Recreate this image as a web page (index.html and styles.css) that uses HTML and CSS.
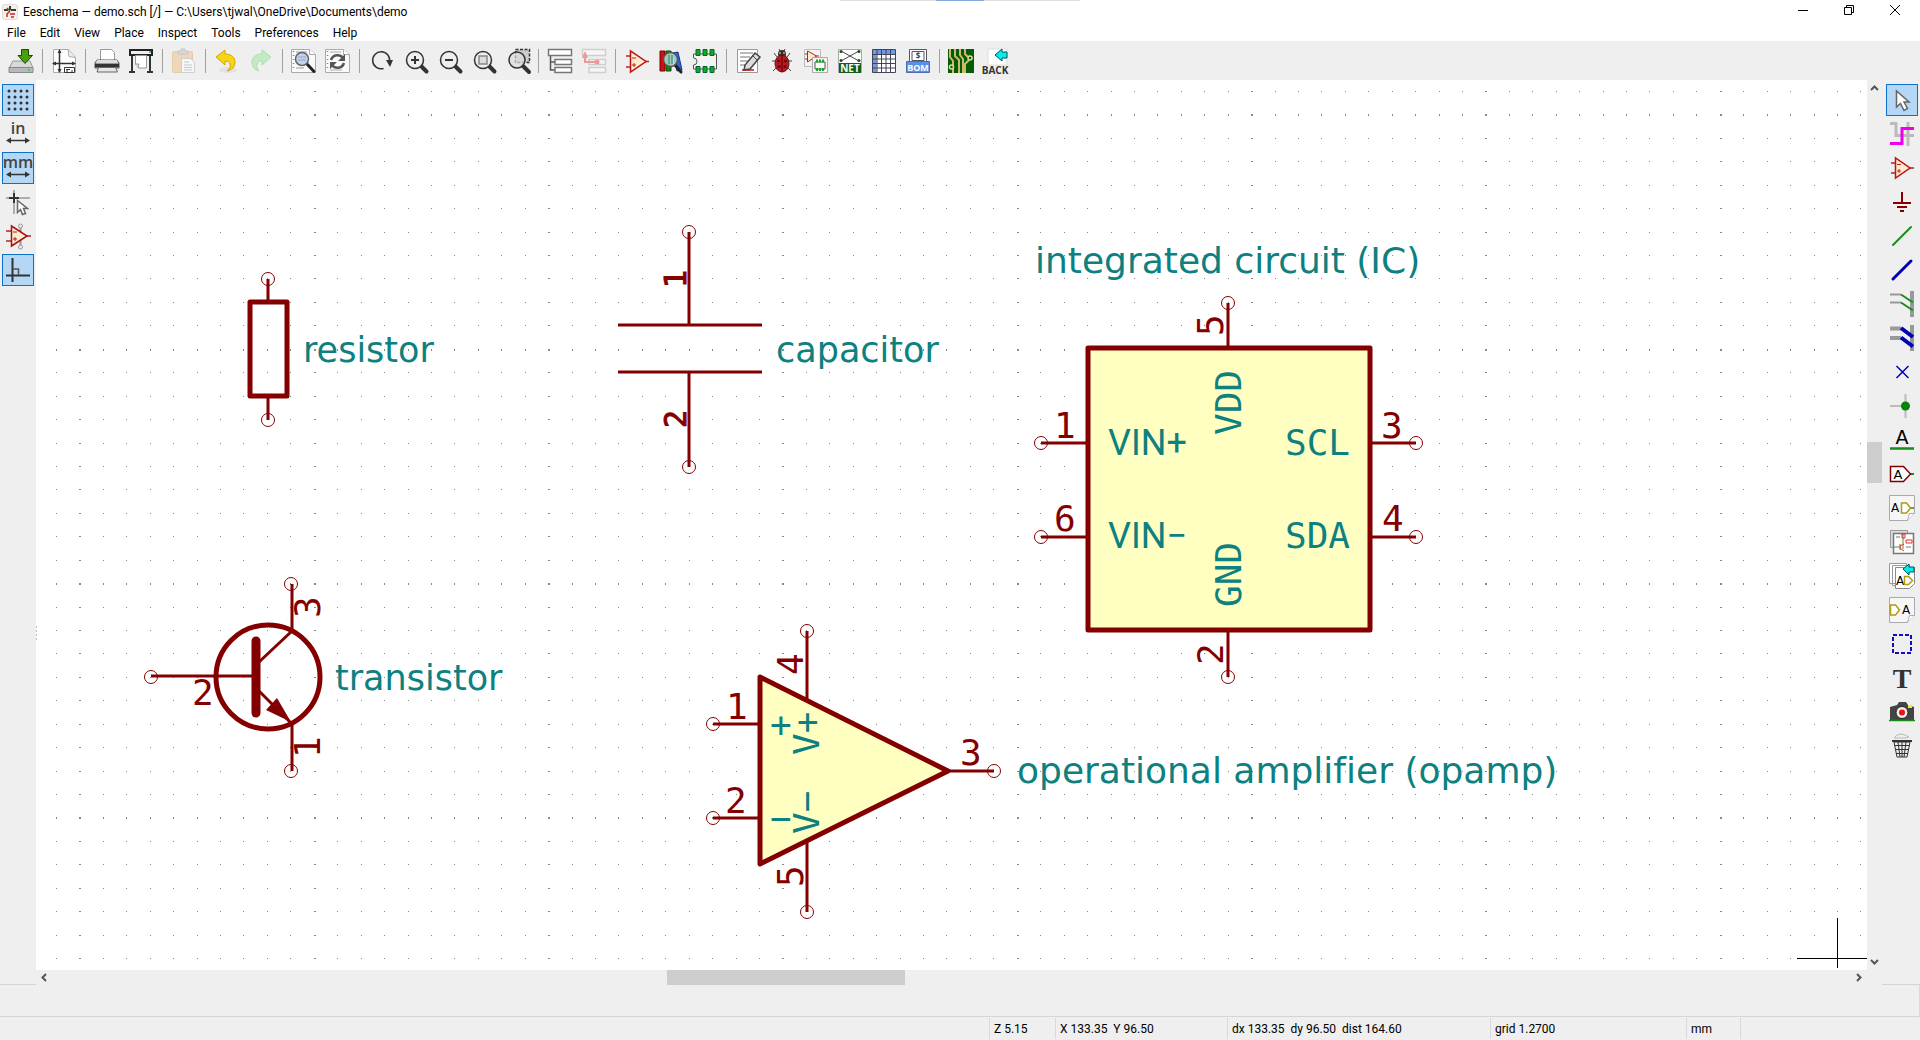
FILE: index.html
```html
<!DOCTYPE html>
<html lang="en">
<head>
<meta charset="utf-8">
<title>Eeschema — demo.sch</title>
<link rel="stylesheet" href="styles.css">
</head>
<body>
<header class="titlebar">
  <div class="grip"></div>
  <svg class="app-icon" viewBox="0 0 16 16"><rect x=".5" y=".5" width="15" height="15" rx="2" fill="#f4f1e8" stroke="#ddd"/><path d="M8 2v4M2 6h4M9 6h5" stroke="#4a3030" stroke-width="2" fill="none"/><path d="M8 7l-3 3v3M8 10h5M9 13h3" stroke="#c22" stroke-width="1.500" fill="none"/><path d="M5 4l3 3" stroke="#373" stroke-width="1.500"/></svg>
  <h1 class="title">Eeschema — demo.sch [/] — C:\Users\tjwal\OneDrive\Documents\demo</h1>
  <div class="window-buttons">
    <button aria-label="Minimize"><svg viewBox="0 0 10 10"><path d="M0 5.500h10" stroke="#000"/></svg></button>
    <button aria-label="Restore"><svg viewBox="0 0 10 10"><path d="M.5 2.500h7v7h-7zM2.500 2.500v-2h7v7h-2" fill="none" stroke="#000"/></svg></button>
    <button aria-label="Close"><svg viewBox="0 0 10 10"><path d="M0 0l10 10M10 0L0 10" stroke="#000"/></svg></button>
  </div>
</header>
<nav class="menubar">
  <button>File</button><button>Edit</button><button>View</button><button>Place</button><button>Inspect</button><button>Tools</button><button>Preferences</button><button>Help</button>
</nav>
<div class="toolbar">
  <button aria-label="Save"><svg viewBox="0 0 26 26"><path d="M5 13h17l3 7H1z" fill="#d9d9d9" stroke="#999"/><path d="M1 19.500h24v5H1z" fill="#b9b9b9" stroke="#888"/><circle cx="21" cy="22" r="1" fill="#3c3"/><path d="M13.500 1.500h7v6h4L17 15.500 10 7.500h3.500z" fill="#4a9f0a" stroke="#1e4a00"/></svg></button>
  <i class="sep"></i>
  <button aria-label="Page settings"><svg viewBox="0 0 26 26"><path d="M2.500 1.500h15l7 8v15h-22z" fill="#fff" stroke="#aaa"/><path d="M17 1.500l1 7 6 1" fill="#eee" stroke="#aaa"/><path d="M8.500 3v21M2 15.500h22" stroke="#333" stroke-width="1.500"/><path d="M8.500 1l-2 4h4zM8.500 25l-2-4h4zM1 15.500l4-2v4zM25 15.500l-4-2v4z" fill="#333"/><path d="M13.500 19.500h10v5h-10z" fill="#fff" stroke="#333"/><path d="M15 21.500h4M15 23h2M20 23h2" stroke="#333"/></svg></button>
  <i class="sep"></i>
  <button aria-label="Print"><svg viewBox="0 0 26 26"><path d="M6.500 13V1.500h11l3 3V13" fill="#fff" stroke="#999"/><path d="M3 12h20l2 3v5H1v-5z" fill="#999" stroke="#555"/><path d="M3 12h20l1 3H2z" fill="#ddd"/><path d="M1 16h24v3H1z" fill="#333"/><path d="M4.500 19.500h17l2 4.500H3z" fill="#e6e6e6" stroke="#666"/></svg></button>
  <button aria-label="Plot"><svg viewBox="0 0 26 26"><path d="M4 8v15M22 8v15M1 24h6M19 24h6" stroke="#333" stroke-width="2"/><path d="M2 2h22v5H2z" fill="#eee" stroke="#222" stroke-width="2"/><circle cx="22" cy="4" r="1" fill="#2b2"/><path d="M7.500 7.500h11V20h-8l-3-4z" fill="#fff" stroke="#999"/><path d="M10 20l1-4-4 0" fill="#ddd" stroke="#999"/></svg></button>
  <i class="sep"></i>
  <button aria-label="Paste" disabled><svg viewBox="0 0 26 26" opacity=".45"><rect x="1.500" y="3.500" width="20" height="21" rx="1" fill="#eebc78" stroke="#d8a45c"/><path d="M7 6V3h3V1h4v2h3v3z" fill="#bbb" stroke="#999"/><path d="M10.500 10.500h9l4 4v10h-13z" fill="#fff" stroke="#aaa"/><path d="M13 14h5M13 17h8M13 19.500h8M13 22h8" stroke="#99a"/></svg></button>
  <i class="sep"></i>
  <button aria-label="Undo"><svg viewBox="0 0 26 26"><ellipse cx="14" cy="22" rx="9" ry="3" fill="#e2e2e2"/><path d="M2 9l9-7v4c7 0 10 4 10 8 0 5-3 8-8 9 3-3 4-4 3-7-.5-2-2-3-5-3v4z" fill="#f7d417" stroke="#d9a400"/></svg></button>
  <button aria-label="Redo" disabled><svg viewBox="0 0 26 26" opacity=".45"><path d="M23 9l-9-7v4C7 6 4 10 4 14c0 5 3 8 7 9-2-3-3-4-2-7 .5-2 2-3 5-3v4z" fill="#8fe68f" stroke="#5c5"/></svg></button>
  <i class="sep"></i>
  <button aria-label="Find"><svg viewBox="0 0 26 26"><path d="M.5 1.500h18l6 5v18H.5z" fill="#fafafa" stroke="#aaa"/><path d="M18.500 1.500v5h6" fill="#fff" stroke="#aaa"/><path d="M2.500 3v20" stroke="#888" stroke-width="1.500" stroke-dasharray="1 3"/><path d="M5 4h11M5 8h3M5 20h8" stroke="#999"/><path d="M16 16l7 7.500" stroke="#222" stroke-width="3" stroke-linecap="round"/><circle cx="11" cy="11" r="6.500" fill="#c3d3ef" stroke="#666" stroke-width="1.500"/><path d="M7 9h8M7 12h8" stroke="#8fa4cc"/></svg></button>
  <button aria-label="Replace"><svg viewBox="0 0 26 26"><path d="M.5 1.500h18l6 5v18H.5z" fill="#fafafa" stroke="#aaa"/><path d="M18.500 1.500v5h6" fill="#fff" stroke="#aaa"/><path d="M2.500 3v20" stroke="#888" stroke-width="1.500" stroke-dasharray="1 3"/><path d="M5 4h11M5 22h12" stroke="#aaa"/><path d="M6 12c2-6 9-6 12-2M19 15c-2 6-9 6-12 2" stroke="#555" stroke-width="2.500" fill="none"/><path d="M20 6v7h-7zM5 21v-7h7z" fill="#555"/></svg></button>
  <i class="sep"></i>
  <button aria-label="Redraw"><svg viewBox="0 0 26 26"><path d="M15.500 20.500A8.500 8.500 0 1 1 21.500 14" fill="none" stroke="#333" stroke-width="1.500"/><path d="M18 12h7l-3 7z" fill="#333"/></svg></button>
  <button aria-label="Zoom in"><svg viewBox="0 0 26 26"><path d="M19 18l5.500 5.500" stroke="#333" stroke-width="4" stroke-linecap="round"/><circle cx="13" cy="12" r="8.500" fill="#eee" stroke="#333" stroke-width="1.500"/><path d="M9 12h8M13 8v8" stroke="#333" stroke-width="2"/></svg></button>
  <button aria-label="Zoom out"><svg viewBox="0 0 26 26"><path d="M19 18l5.500 5.500" stroke="#333" stroke-width="4" stroke-linecap="round"/><circle cx="13" cy="12" r="8.500" fill="#eee" stroke="#333" stroke-width="1.500"/><path d="M9 12h8" stroke="#333" stroke-width="2"/></svg></button>
  <button aria-label="Zoom to fit"><svg viewBox="0 0 26 26"><path d="M19 18l5.500 5.500" stroke="#333" stroke-width="4" stroke-linecap="round"/><circle cx="13" cy="12" r="8.500" fill="#eee" stroke="#333" stroke-width="1.500"/><path d="M9 8h8v8H9z" fill="#ddd" stroke="#888" stroke-width="1.500"/></svg></button>
  <button aria-label="Zoom to selection"><svg viewBox="0 0 26 26"><path d="M11.500 1.500h14v13h-14z" fill="#ccc" stroke="#333" stroke-width="1.500" stroke-dasharray="3 1.500"/><path d="M19 18l6 6" stroke="#333" stroke-width="4" stroke-linecap="round"/><circle cx="13" cy="12" r="8" fill="#ddd" fill-opacity=".7" stroke="#333" stroke-width="1.500"/></svg></button>
  <i class="sep"></i>
  <button aria-label="Hierarchy navigator"><svg viewBox="0 0 26 26"><path d="M3.500 7v15H8M3.500 14H8" fill="none" stroke="#555" stroke-width="1.500"/><path d="M1.500 1.500h23v6h-23zM8 11.500h16.500v5H8zM8 19.500h16.500v5H8z" fill="#fff" stroke="#777" stroke-width="1.500"/></svg></button>
  <button aria-label="Leave sheet" disabled><svg viewBox="0 0 26 26" opacity=".45"><path d="M1.500 1.500h23v6h-23zM8 11.500h16.500v5H8zM8 19.500h16.500v5H8z" fill="#fff" stroke="#aaa" stroke-width="1.500"/><path d="M4 8v6h12" fill="none" stroke="#e33" stroke-width="2"/><path d="M4 3L1 10h6z" fill="#e33"/><circle cx="16" cy="14" r="2.500" fill="#e33"/></svg></button>
  <i class="sep"></i>
  <button aria-label="Symbol editor"><svg viewBox="0 0 26 26"><path d="M2 8h5M2 19h5M20 13.500h5" stroke="#b22" stroke-width="1.500"/><path d="M6.500 3v21L22 13.500z" fill="#fdebcf" stroke="#b11" stroke-width="1.500"/><path d="M8 10h4M8 17h4M10 15v4" stroke="#b22"/></svg></button>
  <button aria-label="Symbol libraries"><svg viewBox="0 0 26 26"><path d="M2 3h5v20H2z" fill="#c11" stroke="#700"/><path d="M8 3h5v20H8z" fill="#181" stroke="#050"/><path d="M15 5l5-1 4 18-5 1z" fill="#36c" stroke="#139"/><path d="M17 17l6 7" stroke="#222" stroke-width="3" stroke-linecap="round"/><circle cx="12.500" cy="11.500" r="7" fill="#bcd8cf" fill-opacity=".85" stroke="#555" stroke-width="1.500"/><path d="M11 7v9M14 7v9" stroke="#5a9" stroke-width="2"/></svg></button>
  <button aria-label="Footprint editor"><svg viewBox="0 0 26 26"><path d="M1.500 6v4a3 3 0 0 1 0 7v4h23V6z" fill="#f4f4f4" stroke="#555"/><path d="M4 1.500h4v6H4zM11 1.500h4v6h-4zM18 1.500h4v6h-4zM4 18.500h4v6H4zM11 18.500h4v6h-4zM18 18.500h4v6h-4z" fill="#1a2" stroke="#063"/></svg></button>
  <i class="sep"></i>
  <button aria-label="Annotate"><svg viewBox="0 0 26 26"><path d="M2.500 1.500h20v23h-20z" fill="#fff" stroke="#999"/><path d="M5 5h13M5 9h10M5 13h8M5 17h5" stroke="#777"/><path d="M7 22h12" stroke="#c11" stroke-width="1.500"/><path d="M20 5l5 4-10 12-6 1 1-5z" fill="#ddd" stroke="#444" stroke-width="1.500"/><path d="M18 8l4 4" stroke="#444"/></svg></button>
  <button aria-label="Electrical rules check"><svg viewBox="0 0 26 26"><path d="M5 5l3 4M21 5l-3 4M3 13h5M23 13h-5M4 23l4-4M22 23l-4-4M10 1l2 4M16 1l-2 4" stroke="#444"/><ellipse cx="13" cy="6" rx="4" ry="4" fill="#332"/><path d="M10 5h2M14 5h2" stroke="#eed"/><ellipse cx="13" cy="15.500" rx="7" ry="8.500" fill="#c11622" stroke="#611"/><path d="M13 7v17" stroke="#500"/><circle cx="9.500" cy="13" r="1.500" fill="#411"/><circle cx="16.500" cy="13" r="1.500" fill="#411"/><circle cx="10" cy="18.500" r="1.500" fill="#411"/><circle cx="16" cy="18.500" r="1.500" fill="#411"/></svg></button>
  <button aria-label="Assign footprints"><svg viewBox="0 0 26 26"><path d="M1.500 1.500h16v17h-16z" fill="#f3f3f3" stroke="#bbb"/><path d="M4.500 3v11l9-6z" fill="#fdebcf" stroke="#b22"/><path d="M2 6h3M2 11h3M13 8h3" stroke="#b22"/><path d="M9.500 9.500h15v15h-15z" fill="#f3f3f3" stroke="#aaa"/><path d="M12 14h10v7H12z" fill="#fff" stroke="#555"/><path d="M13 11.500h2v3h-2zM16 11.500h2v3h-2zM19 11.500h2v3h-2zM13 20h2v3h-2zM16 20h2v3h-2zM19 20h2v3h-2z" fill="#1a2"/></svg></button>
  <button aria-label="Generate netlist"><svg viewBox="0 0 26 26"><path d="M1.500 1.500h23v23h-23z" fill="#fff" stroke="#aaa"/><path d="M4 3l18 10M22 3L4 13" stroke="#444"/><circle cx="4" cy="3.500" r="1.500" fill="#151"/><circle cx="22" cy="3.500" r="1.500" fill="#151"/><circle cx="4" cy="12.500" r="1.500" fill="#151"/><circle cx="22" cy="12.500" r="1.500" fill="#151"/><path d="M2 15h22v10H2z" fill="#165c16"/><text x="13" y="24" class="tag">NET</text></svg></button>
  <button aria-label="Symbol fields table"><svg viewBox="0 0 26 26"><path d="M1.500 1.500h23v23h-23z" fill="#fff"/><path d="M1.500 1.500h23v5h-23zM1.500 1.500h4v23h-4z" fill="#6a9ae8"/><path d="M1.500 1.500h23v23h-23zM1.500 6.500h23M1.500 11h23M1.500 15.500h23M1.500 20h23M6 1.500v23M10.500 1.500v23M15 1.500v23M19.500 1.500v23" fill="none" stroke="#445"/></svg></button>
  <button aria-label="Bill of materials"><svg viewBox="0 0 26 26"><path d="M4.500 1.500h17v12h-17zM7 3.500h12v9H7z" fill="#fff" stroke="#556"/><text x="13" y="11" class="tag dollar">$</text><path d="M1.500 13.500h23v11h-23z" fill="#5b91e8" stroke="#4a6eb0"/><text x="13" y="23" class="tag bom">BOM</text></svg></button>
  <i class="sep"></i>
  <button aria-label="Open board editor"><svg viewBox="0 0 26 26"><path d="M0 1h26v24H0z" fill="#055c05"/><path d="M2 1v8l3 4v12M7 1v7l4 4v13M12 1v6l3 4v14M17 25v-9l4-4M17 1v5l3 3" fill="none" stroke="#cdbb6c" stroke-width="2"/><circle cx="22" cy="10" r="2" fill="#055c05" stroke="#e4dca0" stroke-width="1.500"/><circle cx="3.500" cy="19" r="2" fill="#055c05" stroke="#e4dca0" stroke-width="1.500"/></svg></button>
  <button aria-label="Back annotate"><svg viewBox="0 0 26 26"><path d="M6 1h19v16H6z" fill="#fff" stroke="#ddd"/><path d="M13 7l7-6v3h5v6h-5v3z" fill="#0ee" stroke="#055"/><text x="13" y="26" class="tag back">BACK</text></svg></button>
</div>
<main class="workspace">
  <aside class="sidebar left">
    <button class="on" aria-label="Show grid"><svg viewBox="0 0 26 26"><path d="M4 4h19M4 10h19M4 16h19M4 22h19" stroke="#333" stroke-width="3" stroke-linecap="round" stroke-dasharray="0 6"/></svg></button>
    <button aria-label="Inches"><svg viewBox="0 0 26 26"><text x="13" y="13" class="unit">in</text><path d="M3 19.500h20" stroke="#333" stroke-width="1.500"/><path d="M1 19.500l5-3v6zM25 19.500l-5-3v6z" fill="#333"/></svg></button>
    <button class="on" aria-label="Millimeters"><svg viewBox="0 0 26 26"><text x="13" y="13" class="unit">mm</text><path d="M3 19.500h20" stroke="#333" stroke-width="1.500"/><path d="M1 19.500l5-3v6zM25 19.500l-5-3v6z" fill="#333"/></svg></button>
    <button aria-label="Full-window cursor"><svg viewBox="0 0 26 26"><path d="M1 9h24M9 1v24" stroke="#999" stroke-width="1.500"/><path d="M4 9h10M9 4v10" stroke="#333" stroke-width="2"/><path d="M12.500 11.500v12l3-3 2 5 3-1-2-5h4z" fill="#fff" stroke="#666" stroke-width="1.500"/></svg></button>
    <button aria-label="Hidden pins"><svg viewBox="0 0 26 26"><path d="M15.500 3v20" stroke="#999" stroke-width="2"/><circle cx="15.500" cy="3" r="2" fill="#eee" stroke="#999"/><circle cx="15.500" cy="24" r="2" fill="#eee" stroke="#999"/><path d="M1 8h5M1 18h5M20 13h6" stroke="#b22" stroke-width="1.500"/><path d="M6.500 3v20L22 13z" fill="#fdebcf" stroke="#a11" stroke-width="1.500"/><path d="M8 9h4M8 16h4M10 14v4" stroke="#922"/></svg></button>
    <button class="on" aria-label="Right angle wires"><svg viewBox="0 0 26 26"><path d="M7.500 1v24M1 18.500h24" stroke="#333" stroke-width="2"/><path d="M8 12h5.500v6" fill="none" stroke="#555" stroke-width="1.500"/></svg></button>
  </aside>
  <section class="canvas-pane">
    <svg class="canvas" id="canvas">
      <path class="grid" id="grid"/>
      <path d="M0 547h1M0 551h1M0 555h1M0 559h1" stroke="#888"/>
      <g transform="translate(-36 -80)">
        <g class="pins">
          <path d="M268 279v23M268 397v23M292 584v46M292 724v47M151 676h105M689 232v93M689 372v95M1041 443h46M1041 537h46M1371 443h45M1371 537h45M1228 303v45M1228 632v45M713 724h47M713 818h47M948 771h46M807 631v68M807 842v70"/>
          <path d="M618 325h144M618 372h144M259 662l33-31M259 691l33 33"/>
        </g>
        <g class="pin-ends">
          <circle cx="268" cy="279" r="6.500"/><circle cx="268" cy="420" r="6.500"/>
          <circle cx="689" cy="232" r="6.500"/><circle cx="689" cy="467" r="6.500"/>
          <circle cx="291" cy="584" r="6.500"/><circle cx="291" cy="771" r="6.500"/><circle cx="151" cy="677" r="6.500"/>
          <circle cx="1041" cy="443" r="6.500"/><circle cx="1041" cy="537" r="6.500"/><circle cx="1416" cy="443" r="6.500"/><circle cx="1416" cy="537" r="6.500"/><circle cx="1228" cy="303" r="6.500"/><circle cx="1228" cy="677" r="6.500"/>
          <circle cx="713" cy="724" r="6.500"/><circle cx="713" cy="818" r="6.500"/><circle cx="994" cy="771" r="6.500"/><circle cx="807" cy="631" r="6.500"/><circle cx="807" cy="912" r="6.500"/>
        </g>
        <g class="body">
          <rect x="250" y="302" width="37" height="94" fill="none"/>
          <circle cx="268" cy="677" r="52" fill="none"/>
          <rect class="filled" x="1088" y="348" width="282" height="282"/>
          <path class="filled" d="M760 677l188 94-188 93z"/>
        </g>
        <path d="M256 641v72" stroke="#840000" stroke-width="9" stroke-linecap="round"/>
        <path d="M291 722l-14-24-11 12z" fill="#840000"/>
        <g class="net">
          <text x="303" y="362">resistor</text>
          <text x="335" y="690">transistor</text>
          <text x="776" y="362">capacitor</text>
          <g class="wide"><text x="1035" y="273">integrated circuit (IC)</text>
          <text x="1017" y="783">operational amplifier (opamp)</text></g>
        </g>
        <g class="pin-name">
          <text class="plain" x="1108" y="455">VIN+</text><text class="plain" x="1108" y="548">VIN−</text>
          <text x="1285" y="455">SCL</text><text x="1285" y="548">SDA</text>
          <text transform="translate(1241 435) rotate(-90)">VDD</text>
          <text transform="translate(1241 607) rotate(-90)">GND</text>
          <text x="770" y="737">+</text><text x="770" y="831">−</text>
          <text transform="translate(819 755) rotate(-90)">V+</text>
          <text transform="translate(819 834) rotate(-90)">V−</text>
        </g>
        <g class="pin-number">
          <text x="1054" y="438">1</text><text x="1054" y="531">6</text><text x="1381" y="438">3</text><text x="1382" y="531">4</text>
          <text x="726" y="719">1</text><text x="725" y="813">2</text><text x="960" y="765">3</text>
          <text x="192" y="705">2</text>
          <text transform="translate(1223 336) rotate(-90)">5</text>
          <text transform="translate(1223 665) rotate(-90)">2</text>
          <text transform="translate(803 675) rotate(-90)">4</text>
          <text transform="translate(803 887) rotate(-90)">5</text>
          <text transform="translate(320 618) rotate(-90)">3</text>
          <text transform="translate(320 758) rotate(-90)">1</text>
          <g class="small"><text transform="translate(686 288) rotate(-90)">1</text>
          <text transform="translate(686 428) rotate(-90)">2</text></g>
        </g>
        <path d="M1837.500 918v50M1797 958.500h70" stroke="#000"/>
      </g>
    </svg>
    <div class="vscroll"><svg viewBox="0 0 9 9"><path d="M1 6l3.500-3.500L8 6"/></svg><div class="thumb"></div><svg viewBox="0 0 9 9"><path d="M1 3l3.500 3.500L8 3"/></svg></div>
    <div class="hscroll"><svg viewBox="0 0 9 9"><path d="M6 1L2.500 4.500 6 8"/></svg><div class="thumb"></div><svg viewBox="0 0 9 9"><path d="M3 1l3.500 3.500L3 8"/></svg></div>
  </section>
  <aside class="sidebar right">
    <button class="on" aria-label="Select"><svg viewBox="0 0 26 26"><path d="M7.500 4v16l4-3.500 3.500 7 3.500-2-3.500-6.500h5z" fill="#fff" stroke="#666" stroke-width="1.500"/></svg></button>
    <button aria-label="Highlight net"><svg viewBox="0 0 26 26"><path d="M1 2.500h6v12h18M19 1v24" stroke="#bbb" stroke-width="3" fill="none"/><path d="M1 22.500h12v-15h12" stroke="#e0e" stroke-width="3" fill="none"/></svg></button>
    <button aria-label="Place symbol"><svg viewBox="0 0 26 26"><path d="M2 8h5M2 18h5M20 13h5" stroke="#b22" stroke-width="1.500"/><path d="M6.500 3v20L21 13z" fill="#fdebcf" stroke="#b11" stroke-width="1.500"/><path d="M8 9.500h4M8 16h4M10 14v4" stroke="#b22"/></svg></button>
    <button aria-label="Place power port"><svg viewBox="0 0 26 26"><path d="M13 3v11M4 14h18M8 18h10M11 22h4" stroke="#840000" stroke-width="2"/></svg></button>
    <button aria-label="Place wire"><svg viewBox="0 0 26 26"><path d="M4 22L22 4" stroke="#1a8a1a" stroke-width="2" stroke-linecap="round"/></svg></button>
    <button aria-label="Place bus"><svg viewBox="0 0 26 26"><path d="M4 22L22 4" stroke="#0000b4" stroke-width="3" stroke-linecap="round"/></svg></button>
    <button aria-label="Wire to bus entry"><svg viewBox="0 0 26 26"><path d="M23 0v26" stroke="#999" stroke-width="4"/><path d="M1 3.500h11M1 11.500h11" stroke="#999" stroke-width="2"/><path d="M12 3.500l12 8M12 11.500l12 8" stroke="#1a8a1a" stroke-width="2"/></svg></button>
    <button aria-label="Bus to bus entry"><svg viewBox="0 0 26 26"><path d="M23 0v26" stroke="#999" stroke-width="4"/><path d="M1 3.500h11M1 13h11" stroke="#999" stroke-width="4"/><path d="M12 3l12 9M12 12.500l12 9" stroke="#0000b4" stroke-width="4"/></svg></button>
    <button aria-label="No connect"><svg viewBox="0 0 26 26"><path d="M7.500 7l12 12M19.500 7l-12 12" stroke="#0000b4" stroke-width="1.500"/></svg></button>
    <button aria-label="Junction"><svg viewBox="0 0 26 26"><path d="M1 13h14M16.500 1v24" stroke="#bbb" stroke-width="2"/><circle cx="16.500" cy="13" r="4.500" fill="#0a800a"/></svg></button>
    <button aria-label="Net label"><svg viewBox="0 0 26 26"><text x="13" y="17" class="letter big">A</text><path d="M1 21.500h24" stroke="#1a8a1a" stroke-width="2.500"/></svg></button>
    <button aria-label="Global label"><svg viewBox="0 0 26 26"><path d="M20 13h5" stroke="#1a8a1a" stroke-width="2"/><path d="M1.500 5.500h13l7 7.500-7 7.500h-13z" fill="#fff" stroke="#840000" stroke-width="1.500"/><text x="9" y="18" class="letter">A</text></svg></button>
    <button aria-label="Hierarchical label"><svg viewBox="0 0 26 26"><path d="M.5.500h25v18l-7 7H.5z" fill="#f6f6f6" stroke="#aaa"/><path d="M25.500 18.500h-5l-2 7" fill="#fff" stroke="#aaa"/><text x="6" y="17" class="letter small">A</text><path d="M20 13h5" stroke="#1a8a1a" stroke-width="1.500"/><path d="M12.500 8h5l4 5-4 5h-5z" fill="#fff" stroke="#b59a15" stroke-width="1.500"/></svg></button>
    <button aria-label="Hierarchical sheet"><svg viewBox="0 0 26 26"><path d="M1.500 1.500h17v17h-17z" fill="#ddd" stroke="#999"/><path d="M4.500 4.500h20v20h-20z" fill="#fff" stroke="#777" stroke-width="1.500"/><path d="M14 5v15M5 18h7" stroke="#494"/><path d="M13 5h3v4h-3zM17 11h6v3h-6zM11 15v6M11 17l4-2M11 19l4 3" fill="none" stroke="#d33"/><path d="M7 8h4M17 18h5" stroke="#777"/></svg></button>
    <button aria-label="Import sheet pin"><svg viewBox="0 0 26 26"><path d="M.5.500h17v20H.5zM3.500 2.500h17v20h-17z" fill="#fff" stroke="#999"/><path d="M6.500 4.500h19v16l-5 5h-14z" fill="#fff" stroke="#888"/><text x="11" y="22" class="letter small">A</text><path d="M15.500 13.500h4l4 4-4 4h-4z" fill="#fff" stroke="#b59a15" stroke-width="1.500"/><path d="M14 6l6-5v3h5v5h-5v3z" fill="#0ee" stroke="#055"/></svg></button>
    <button aria-label="Sheet pin"><svg viewBox="0 0 26 26"><path d="M.5.500h25v18l-7 7H.5z" fill="#f6f6f6" stroke="#aaa"/><path d="M25.500 18.500h-5l-2 7" fill="#fff" stroke="#aaa"/><text x="17" y="17" class="letter small">A</text><path d="M1.500 8h5l4 5-4 5h-5z" fill="#fff" stroke="#b59a15" stroke-width="1.500"/></svg></button>
    <button aria-label="Graphic lines"><svg viewBox="0 0 26 26"><path d="M4 4h18v18H4z" fill="none" stroke="#1010c0" stroke-width="2" stroke-dasharray="4 2"/></svg></button>
    <button aria-label="Text"><svg viewBox="0 0 26 26"><text x="13" y="23" class="serif-t">T</text></svg></button>
    <button aria-label="Image"><svg viewBox="0 0 26 26"><path d="M1 8l7-2 2-3h7l2 3 6 2v14H1z" fill="#444"/><path d="M19 6h4v3h-4z" fill="#ee2"/><circle cx="13" cy="13.500" r="6" fill="#eee" stroke="#222"/><circle cx="13" cy="13.500" r="3" fill="#e11"/><path d="M0 21.500h26" stroke="#1a8a1a" stroke-width="1.500"/></svg></button>
    <button aria-label="Delete"><svg viewBox="0 0 26 26"><path d="M5 5l3-3 4-1 4 1 4 2-3 1z" fill="#eee" stroke="#bbb"/><path d="M3 8h20" stroke="#333" stroke-width="2"/><path d="M5 9l3 15h10l3-15zM9 9l2 15M13 9v15M17 9l-2 15M5.500 12.500h15M6.500 16.500h13M7 20.500h12" fill="none" stroke="#333"/></svg></button>
  </aside>
</main>
<div class="message-panel"></div>
<footer class="statusbar">
  <span></span><span>Z 5.15</span><span>X 133.35&nbsp; Y 96.50</span><span>dx 133.35&nbsp; dy 96.50&nbsp; dist 164.60</span><span>grid 1.2700</span><span>mm</span><span></span>
</footer>
<script src="grid.js"></script>
</body>
</html>
```
FILE: grid.js
```js
// Draws the schematic grid: one dot per 1.27 mm step, every tenth one heavier.
const canvas = document.getElementById('canvas');
const grid = document.getElementById('grid');

function drawGrid() {
  const { width, height } = canvas.getBoundingClientRect();
  const pitch = 703 / 30;
  let d = '';
  for (let j = 0; 12 + j * pitch < height; j++) {
    for (let i = 0; 20 + i * pitch < width; i++) {
      const w = i % 10 === 1 ? 2 : 1;
      const h = j % 10 === 1 ? 2 : 1;
      d += `M${Math.round(20 + i * pitch)} ${Math.round(11 + j * pitch)}h${w}v${h}h-${w}z`;
    }
  }
  grid.setAttribute('d', d);
}

drawGrid();
window.addEventListener('resize', drawGrid);
```
FILE: styles.css
```css
* { box-sizing: border-box; }

body {
  margin: 0;
  min-height: 100vh;
  display: flex;
  flex-direction: column;
  background: #fff;
  color: #000;
  font: 12px/16px Roboto, "Noto Sans", sans-serif;
}

button {
  margin: 0;
  padding: 0;
  border: 0;
  background: none;
  color: inherit;
  font: inherit;
}

/* Title and menu */
.titlebar { position: relative; display: flex; height: 24px; align-items: center; padding-left: 2px; }
.app-icon { width: 16px; height: 16px; margin-right: 5px; }
.title { margin: 0; flex: 1; font-size: 12px; font-weight: 400; }
.grip {
  position: absolute;
  top: 0;
  left: 50%;
  width: 240px;
  height: 1px;
  margin-left: -120px;
  background: linear-gradient(90deg, #e0e0e0 40%, #84abdc 40% 60%, #e0e0e0 60%);
}
.window-buttons { display: flex; align-self: flex-start; margin-right: 2px; }
.window-buttons button { display: grid; place-items: center; width: 46px; height: 20px; }
.window-buttons svg { width: 10px; height: 10px; }
.menubar { display: flex; height: 17px; }
.menubar button { padding: 0 7px; }

/* Toolbars */
.toolbar { display: flex; align-items: center; height: 39px; padding-left: 4px; background: #efefef; }
.toolbar button { display: grid; place-items: center; width: 34px; height: 34px; }
.toolbar svg, .sidebar svg { width: 26px; height: 26px; overflow: visible; }
.sep { width: 1px; height: 24px; margin: 0 4px; background: #a0a0a0; }
.workspace { flex: 1; display: flex; background: #efefef; }
.sidebar { display: flex; flex-direction: column; gap: 2px; padding: 4px 2px; }
.sidebar button { display: grid; place-items: center; width: 32px; height: 32px; }
.sidebar .on { background: #b3d7f5; border: 1px solid #0f70c8; }
.left { width: 36px; }
.right { width: 38px; padding-left: 4px; }

.tag { font: 700 10px "Open Sans", sans-serif; fill: #fff; text-anchor: middle; }
.dollar { fill: #445; font-size: 8px; }
.bom { font-size: 9px; }
.back { fill: #333; font-size: 10px; }
.unit { font: 600 16px "Open Sans", sans-serif; fill: #444; text-anchor: middle; }
.letter { font: 13px "DejaVu Sans", sans-serif; fill: #000; text-anchor: middle; }
.letter.big { font-size: 19px; }
.letter.small { font-size: 12px; }
.serif-t { font: 700 28px "Liberation Serif", serif; fill: #333; text-anchor: middle; }

/* Schematic */
.canvas-pane { flex: 1; display: grid; grid-template: 1fr 15px / 1fr 15px; min-width: 0; }
.canvas { width: 100%; height: 100%; min-height: 400px; background: #fff; font-variant-ligatures: none; }
.grid { fill: #888; shape-rendering: crispEdges; }
.pins { stroke: #840000; stroke-width: 3; fill: none; }
.pin-ends { stroke: #840000; stroke-width: 1; fill: none; }
.body { stroke: #840000; stroke-width: 5; stroke-linejoin: round; }
.filled { fill: #ffffc2; }
.net { fill: #0d8080; font-family: "DejaVu Sans", sans-serif; font-size: 35px; }
.net .wide { font-size: 36px; }
.pin-name { fill: #0d8080; font-family: "DejaVu Sans Mono", monospace; font-size: 36px; }
.pin-name .plain { font-family: Roboto, sans-serif; }
.pin-number { fill: #840000; font-family: "DejaVu Sans Mono", monospace; font-size: 36px; }
.pin-number .small { font-size: 30px; stroke: #840000; stroke-width: 1; }

/* Scroll bars */
.hscroll { display: grid; grid-template-columns: 17px 614fr 238fr 945fr 17px; place-items: center; }
.vscroll { display: grid; grid-template-rows: 17px 345fr 41fr 470fr 17px; place-items: center; }
.hscroll svg, .vscroll svg { width: 9px; height: 9px; fill: none; stroke: #555; stroke-width: 2; }
.thumb { width: 100%; height: 100%; background: #cdcdcd; }
.hscroll .thumb { grid-column: 3; }
.vscroll .thumb { grid-row: 3; }
.hscroll svg:last-child { grid-column: 5; }
.vscroll svg:last-child { grid-row: 5; }

/* Bottom panels */
.message-panel { height: 32px; background: #efefef; border-right: 1px solid #d9d9d9; border-bottom: 1px solid #d4d4d4; }
.left, .right { border-bottom: 1px solid #d4d4d4; }
.statusbar {
  display: grid;
  grid-template-columns: 990fr 66fr 172fr 263fr 196fr 54fr 179fr;
  height: 23px;
  align-items: center;
  background: #efefef;
}
.statusbar span { height: 21px; padding-left: 4px; line-height: 22px; border-right: 1px solid #d9d9d9; }
.statusbar span:last-child { border-right: 0; }
```
